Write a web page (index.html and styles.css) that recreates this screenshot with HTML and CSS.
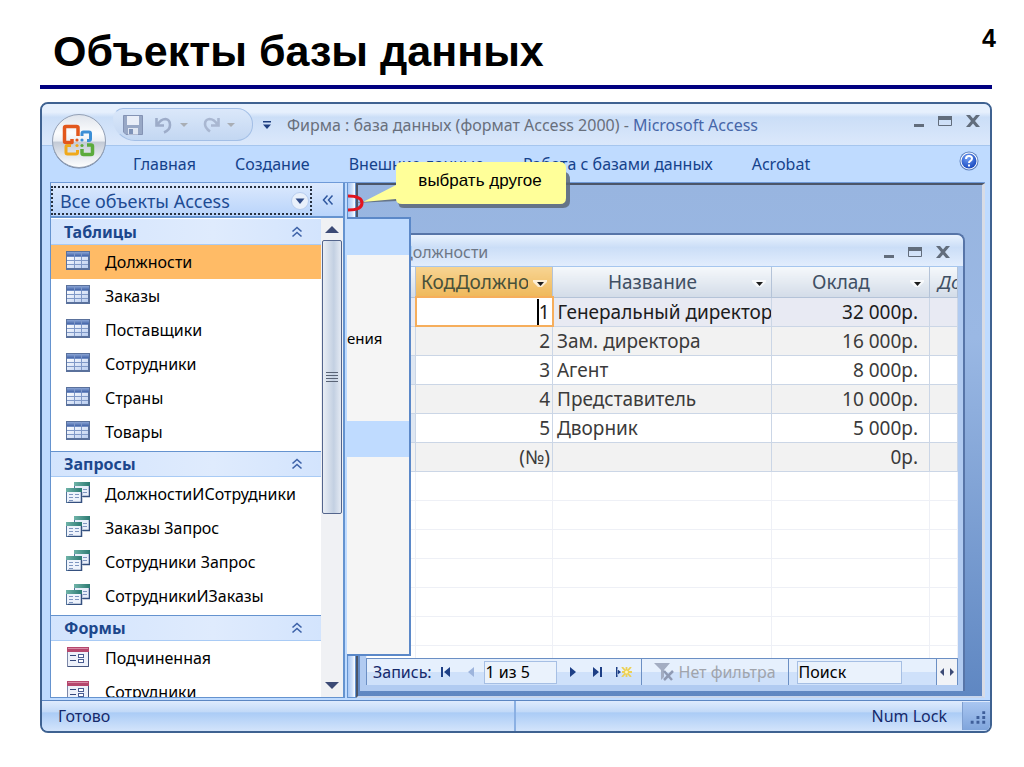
FILE: index.html
```html
<!DOCTYPE html>
<html lang="ru">
<head>
<meta charset="utf-8">
<title>Объекты базы данных</title>
<link rel="stylesheet" href="styles.css">
</head>
<body>
<svg class="defs" aria-hidden="true">
  <defs>
    <linearGradient id="gHead" x1="0" y1="0" x2="0" y2="1"><stop offset="0" stop-color="#8aa5d6"/><stop offset="1" stop-color="#4465a8"/></linearGradient>
    <linearGradient id="gCell" x1="0" y1="0" x2="1" y2="1"><stop offset="0" stop-color="#ffffff"/><stop offset="1" stop-color="#b9cdf0"/></linearGradient>
    <linearGradient id="gTeal" x1="0" y1="0" x2="1" y2="0"><stop offset="0" stop-color="#6fb3a8"/><stop offset="1" stop-color="#2c7a72"/></linearGradient>
    <linearGradient id="gOrb" x1="0" y1="0" x2="0" y2="1"><stop offset="0" stop-color="#dfe4ec"/><stop offset=".35" stop-color="#fbfcfd"/><stop offset=".5" stop-color="#eceff4"/><stop offset=".52" stop-color="#c3cad6"/><stop offset=".8" stop-color="#e6eaf0"/><stop offset="1" stop-color="#ffffff"/></linearGradient>
    <radialGradient id="gHelp" cx=".4" cy=".3" r=".8"><stop offset="0" stop-color="#6f9df5"/><stop offset="1" stop-color="#0f3fb8"/></radialGradient>
    <symbol id="i-table" viewBox="0 0 24 19">
      <rect x="0" y="0" width="24" height="19" fill="#5a719c"/>
      <rect x="1" y="1" width="22" height="4" fill="url(#gHead)"/>
      <rect x="1" y="5" width="21" height="12" fill="url(#gCell)"/>
      <path d="M1 9.500h21M1 13.500h21M8.500 1v16M15.500 1v16" stroke="#8099c8" fill="none"/>
      <path d="M1 5.500h21" stroke="#6f8cc4"/>
    </symbol>
    <symbol id="i-query" viewBox="0 0 24 21">
      <rect x="8.500" y=".5" width="15" height="14" fill="#e8eefa" stroke="#54739a"/>
      <rect x="8" y="0" width="16" height="4" fill="url(#gTeal)"/>
      <path d="M17 7.500h4M17 10.500h4" stroke="#7f96c0"/>
      <rect x=".5" y="6.500" width="15" height="14" fill="#eef3fc" stroke="#54739a"/>
      <rect x="0" y="6" width="16" height="4" fill="url(#gTeal)"/>
      <path d="M3 12.500h4M9 12.500h4M3 15.500h4M9 15.500h4M3 18.500h4" stroke="#7f96c0"/>
      <path d="M15.500 10v10.500H2" stroke="#35507f" stroke-width="1.500" fill="none"/>
      <path d="M23.500 4v10.500H17" stroke="#35507f" stroke-width="1.500" fill="none"/>
    </symbol>
    <symbol id="i-form" viewBox="0 0 22 20">
      <rect x=".5" y=".5" width="21" height="19" fill="#edf1fa" stroke="#7d88a8"/>
      <rect x="0" y="0" width="22" height="5" fill="#b5476d"/>
      <path d="M1 1.500h20" stroke="#d98aa5"/>
      <path d="M3 8.500h6M3 13.500h6" stroke="#34477c"/>
      <rect x="11.500" y="7.500" width="5" height="3" fill="#fff" stroke="#4a5d92"/>
      <rect x="11.500" y="12.500" width="5" height="3" fill="#fff" stroke="#4a5d92"/>
      <path d="M21.500 5v14.500H1" stroke="#44557f" fill="none"/>
    </symbol>
    <symbol id="i-up" viewBox="0 0 12 12">
      <path d="M1.500 5.500L6 1.500l4.500 4M1.500 10.500L6 6.500l4.500 4" fill="none" stroke="#3d62a8" stroke-width="1.600"/>
    </symbol>
    <symbol id="i-min" viewBox="0 0 10 14"><rect x="0" y="10" width="10" height="3" fill="currentColor"/></symbol>
    <symbol id="i-max" viewBox="0 0 14 14"><path d="M.5 2.500h13v9H.5z" fill="none" stroke="currentColor"/><path d="M0 2h14v4H0z" fill="currentColor"/></symbol>
    <symbol id="i-close" viewBox="0 0 14 14"><path d="M0 1h4l3 3.500L10 1h4L9 7l5 6h-4L7 9.500 4 13H0l5-6z" fill="currentColor"/></symbol>
    <symbol id="i-drop" viewBox="0 0 14 8"><path d="M0 0h14v2l-5 5H5L0 2z" fill="#fff" opacity=".7"/><path d="M4 2h7L7.500 6z" fill="#1c1c1c"/></symbol>
  </defs>
</svg>

<main class="slide">
  <header class="slide-head">
    <h1>Объекты базы данных</h1>
    <span class="page-no">4</span>
  </header>

  <section class="app">
    <button class="office" aria-label="Office">
      <svg viewBox="0 0 56 56" width="56" height="56">
        <circle cx="28" cy="29" r="26.500" fill="#6e7f9a"/>
        <circle cx="28" cy="28" r="26.500" fill="url(#gOrb)" stroke="#93a0b5"/>
        <g fill="none" stroke-width="3.500" stroke-linejoin="round">
          <path d="M27 23v-8.500q0-1-1.500-1H15q-1.500 0-1.500 1.500v13q0 1.500 1.500 1.500h6V26" stroke="#e2571c"/>
          <path d="M31 23v-2.500q0-1.500 1.500-1.500H38q1.500 0 1.500 1.500V26q0 1.500-1.500 1.500h-2" stroke="#3c8fd6" stroke-width="3"/>
          <path d="M20 32.500h-3.500q-1.500 0-1.500 1.500v5.500q0 1.500 1.500 1.500H25q1.500 0 1.500-1.500V37" stroke="#f0a91c" stroke-width="3"/>
          <path d="M31 36v4q0 1.500 1.500 1.500H40q1.500 0 1.500-1.500v-6.500q0-1.500-1.500-1.500h-4" stroke="#5bab3c"/>
        </g>
        <g><circle cx="26" cy="27" r="1.600" fill="#e2571c"/><circle cx="31" cy="27" r="1.600" fill="#3c8fd6"/><circle cx="26" cy="32.500" r="1.600" fill="#f0a91c"/><circle cx="31" cy="32.500" r="1.600" fill="#5bab3c"/></g>
      </svg>
    </button>

    <div class="titlebar">
      <div class="quick">
        <button aria-label="Сохранить"><svg viewBox="0 0 20 20" width="20" height="20"><path d="M.5.5h19v19H3l-2.500-2.500z" fill="#98a8c6" stroke="#8493b4"/><rect x="4" y="1" width="12" height="9" fill="#e9eef8"/><rect x="5" y="13" width="10" height="6.500" fill="#dfe6f2"/><rect x="6" y="14" width="4" height="5" fill="#7f93b8"/></svg></button>
        <button aria-label="Отменить"><svg viewBox="0 0 18 18" width="18" height="18"><path d="M1.500 2v7.500H9M2.500 8.500Q6 3 10.500 3 15 3.500 15 9q0 5-6 7.500" fill="none" stroke="#9dacc9" stroke-width="2.600"/></svg></button>
        <span class="tri"></span>
        <button aria-label="Повторить"><svg viewBox="0 0 18 18" width="18" height="18"><path d="M16.500 2v7.500H9M15.500 8.500Q12 3 7.500 3 3 3.500 3 8q0 4 5 7.500" fill="none" stroke="#a9b7d1" stroke-width="2.600"/></svg></button>
        <span class="tri"></span>
      </div>
      <svg class="more" viewBox="0 0 8 8" width="8" height="8"><path d="M0 0h8v1.500H0zM0 3.500h8L4 8z" fill="#1f3f80"/></svg>
      <div class="caption">Фирма : база данных (формат Access 2000) - <span class="product">Microsoft Access</span></div>
      <div class="win-btns">
        <button aria-label="Свернуть"><svg width="10" height="14"><use href="#i-min"/></svg></button>
        <button aria-label="Развернуть"><svg width="14" height="14"><use href="#i-max"/></svg></button>
        <button aria-label="Закрыть"><svg width="14" height="14"><use href="#i-close"/></svg></button>
      </div>
    </div>

    <nav class="ribbon">
      <button>Главная</button>
      <button>Создание</button>
      <button>Внешние данные</button>
      <button>Работа с базами данных</button>
      <button>Acrobat</button>
      <button class="help" aria-label="Справка"><svg viewBox="0 0 20 20" width="20" height="20"><circle cx="10" cy="10" r="9.500" fill="#5a7fc0"/><circle cx="10" cy="10" r="8.500" fill="#fff"/><circle cx="10" cy="10" r="7.500" fill="url(#gHelp)"/><path d="M7 8q0-3 3-3t3 2.500q0 1.500-1.500 2.300T10 12M10 13.500v2" fill="none" stroke="#fff" stroke-width="2"/></svg></button>
    </nav>

    <div class="body">
      <aside class="nav">
        <div class="nav-head">
          <button class="nav-title">Все объекты Access
            <svg viewBox="0 0 18 18" width="18" height="18"><circle cx="9" cy="9" r="8.500" fill="#e9f0fb" stroke="#b8cdee"/><path d="M4.500 6.500h9L9 12z" fill="#2f4a86"/></svg>
          </button>
          <button class="collapse" aria-label="Свернуть область"><svg viewBox="0 0 12 12" width="12" height="12"><path d="M5.500 1.500L1.500 6l4 4.500M10.500 1.500L6.500 6l4 4.500" fill="none" stroke="#2f579f" stroke-width="1.500"/></svg></button>
        </div>
        <div class="nav-main">
          <div class="list">
            <button class="group">Таблицы<svg width="12" height="12"><use href="#i-up"/></svg></button>
            <ul>
              <li><button class="item on"><svg width="24" height="19"><use href="#i-table"/></svg>Должности</button></li>
              <li><button class="item"><svg width="24" height="19"><use href="#i-table"/></svg>Заказы</button></li>
              <li><button class="item"><svg width="24" height="19"><use href="#i-table"/></svg>Поставщики</button></li>
              <li><button class="item"><svg width="24" height="19"><use href="#i-table"/></svg>Сотрудники</button></li>
              <li><button class="item"><svg width="24" height="19"><use href="#i-table"/></svg>Страны</button></li>
              <li><button class="item"><svg width="24" height="19"><use href="#i-table"/></svg>Товары</button></li>
            </ul>
            <button class="group">Запросы<svg width="12" height="12"><use href="#i-up"/></svg></button>
            <ul>
              <li><button class="item"><svg width="24" height="21"><use href="#i-query"/></svg>ДолжностиИСотрудники</button></li>
              <li><button class="item"><svg width="24" height="21"><use href="#i-query"/></svg>Заказы Запрос</button></li>
              <li><button class="item"><svg width="24" height="21"><use href="#i-query"/></svg>Сотрудники Запрос</button></li>
              <li><button class="item"><svg width="24" height="21"><use href="#i-query"/></svg>СотрудникиИЗаказы</button></li>
            </ul>
            <button class="group">Формы<svg width="12" height="12"><use href="#i-up"/></svg></button>
            <ul>
              <li><button class="item"><svg width="24" height="20"><use href="#i-form"/></svg>Подчиненная</button></li>
              <li><button class="item"><svg width="24" height="20"><use href="#i-form"/></svg>Сотрудники</button></li>
            </ul>
          </div>
          <div class="scroll">
            <svg viewBox="0 0 14 8" width="14" height="8"><path d="M0 8l7-7 7 7z" fill="#3c4a75"/></svg>
            <div class="thumb"><i></i></div>
            <svg viewBox="0 0 14 8" width="14" height="8"><path d="M0 0l7 7 7-7z" fill="#3c4a75"/></svg>
          </div>
        </div>
      </aside>

      <div class="splitter"></div>

      <div class="workspace">
        <section class="sheet">
          <div class="sheet-title">
            <span class="sheet-name">Должности</span>
            <div class="win-btns">
              <button aria-label="Свернуть"><svg width="10" height="14"><use href="#i-min"/></svg></button>
              <button aria-label="Развернуть"><svg width="14" height="14"><use href="#i-max"/></svg></button>
              <button aria-label="Закрыть"><svg width="14" height="14"><use href="#i-close"/></svg></button>
            </div>
          </div>
          <div class="grid">
            <table>
              <colgroup><col class="c-sel"><col class="c-id"><col class="c-name"><col class="c-pay"><col></colgroup>
              <thead>
                <tr><th></th><th class="active"><div class="th"><span>КодДолжности</span><svg width="14" height="8"><use href="#i-drop"/></svg></div></th><th><div class="th"><span>Название</span><svg width="14" height="8"><use href="#i-drop"/></svg></div></th><th><div class="th"><span>Оклад</span><svg width="14" height="8"><use href="#i-drop"/></svg></div></th><th class="add">Добавить</th></tr>
              </thead>
              <tbody>
                <tr class="current"><td class="sel"></td><td class="n edit"><span>1</span></td><td>Генеральный директор</td><td class="pay">32 000р.</td><td></td></tr>
                <tr><td class="sel"></td><td class="n">2</td><td>Зам. директора</td><td class="pay">16 000р.</td><td></td></tr>
                <tr><td class="sel"></td><td class="n">3</td><td>Агент</td><td class="pay">8 000р.</td><td></td></tr>
                <tr><td class="sel"></td><td class="n">4</td><td>Представитель</td><td class="pay">10 000р.</td><td></td></tr>
                <tr><td class="sel"></td><td class="n">5</td><td>Дворник</td><td class="pay">5 000р.</td><td></td></tr>
                <tr><td></td><td class="n">(№)</td><td></td><td class="pay">0р.</td><td></td></tr>
                <tr class="blank"><td></td><td></td><td></td><td></td><td></td></tr>
                <tr class="blank"><td></td><td></td><td></td><td></td><td></td></tr>
                <tr class="blank"><td></td><td></td><td></td><td></td><td></td></tr>
                <tr class="blank"><td></td><td></td><td></td><td></td><td></td></tr>
                <tr class="blank"><td></td><td></td><td></td><td></td><td></td></tr>
                <tr class="blank"><td></td><td></td><td></td><td></td><td></td></tr>
                <tr class="blank"><td></td><td></td><td></td><td></td><td></td></tr>
              </tbody>
            </table>
          </div>
          <div class="records">
            <label for="rec">Запись:</label>
            <div class="steps">
              <button aria-label="Первая"><svg viewBox="0 0 10 10" width="10" height="10"><path d="M0 0h2v10H0zM9 0v10L3 5z" fill="#1d3f86"/></svg></button>
              <button aria-label="Предыдущая"><svg viewBox="0 0 10 10" width="10" height="10"><path d="M7 0v10L1 5z" fill="#9db4dc"/></svg></button>
            </div>
            <input id="rec" class="rec" value="1 из 5">
            <div class="steps next">
              <button aria-label="Следующая"><svg viewBox="0 0 10 10" width="10" height="10"><path d="M2 0v10l6-5z" fill="#1d3f86"/></svg></button>
              <button aria-label="Последняя"><svg viewBox="0 0 10 10" width="10" height="10"><path d="M8 0h2v10H8zM1 0v10l6-5z" fill="#1d3f86"/></svg></button>
              <button aria-label="Новая"><svg viewBox="0 0 16 10" width="16" height="10"><path d="M0 0h1.500v10H0zM1 2v6l4-3z" fill="#1d3f86"/><path d="M6 0l9 10M15 0L6 10M10.500 0v10M6 5h10" stroke="#ecd054" stroke-width="1.800"/><circle cx="10.500" cy="5" r="1.500" fill="#fff6c0"/></svg></button>
            </div>
            <button class="filter"><svg viewBox="0 0 20 20" width="20" height="20"><path d="M0 1h16l-6 7v7l-3 3V8z" fill="#a3adc2"/><path d="M10 9l8 9M19 9l-9 9" stroke="#8f9ab3" stroke-width="2.500"/></svg>Нет фильтра</button>
            <div class="find"><input value="Поиск" aria-label="Поиск"></div>
            <div class="hscroll"><svg viewBox="0 0 16 10" width="16" height="10"><path d="M5 1v8L1 5zM11 1v8l4-4z" fill="#3c4a75"/></svg></div>
          </div>
        </section>
      </div>

      <div class="menu">
        <div class="menu-head"></div>
        <div class="menu-part"><span>ения</span></div>
        <div class="menu-head"></div>
        <div class="menu-part rest"></div>
      </div>
    </div>

    <footer class="status">
      <span class="ready">Готово</span>
      <span class="lock">Num Lock</span>
      <svg class="grip" viewBox="0 0 28 28" width="28" height="28"><path d="M20 9h3v3h-3zM20 14h3v3h-3zM20 19h3v3h-3zM14 14h3v3h-3zM14 19h3v3h-3zM8 19h3v3H8z" fill="#3f5f9a"/></svg>
    </footer>

    <div class="callout">
      <svg viewBox="0 0 228 54" width="228" height="54">
        <path d="M12 43L54 36h160V12h8q6 0 6 8v21q0 7-7 7H62q-5 0-5-3l-2-4z" fill="#5c6878" opacity=".85"/>
        <path d="M60 2h158q6 0 6 6v30q0 6-6 6H60q-6 0-6-5l-33 3 33-17V8q0-6 6-6z" fill="#ffff99"/>
        <path d="M6 36q14 0 14 7t-14 7" fill="none" stroke="#e3141e" stroke-width="3"/>
      </svg>
      <span>выбрать другое</span>
    </div>
  </section>
</main>
</body>
</html>
```
FILE: styles.css
```css
* { box-sizing: border-box; }
body { margin: 0; background: #fff; font-family: "Noto Sans", "Open Sans", sans-serif; font-size: 16px; color: #15296b; }
button, input { font: inherit; color: inherit; margin: 0; padding: 0; border: 0; background: none; }
button { display: flex; align-items: center; cursor: pointer; white-space: nowrap; }
ul { list-style: none; margin: 0; padding: 0 0 2px; }
svg { display: block; flex: none; }
.defs { position: absolute; width: 0; height: 0; }

.slide { height: 100vh; display: flex; flex-direction: column; padding: 0 32px 34px 40px; }
.slide-head { display: flex; justify-content: space-between; align-items: flex-start; height: 89px; flex: none; margin-bottom: 13px; border-bottom: 4px solid #000080; font-family: "Liberation Sans", Arial, sans-serif; color: #000; }
h1 { margin: 0; padding: 26px 0 0 13px; font-size: 43px; line-height: 50px; font-weight: 700; }
.page-no { margin-right: -4px; padding-top: 23px; font-size: 25px; line-height: 30px; font-weight: 700; }

.app { position: relative; flex: 1; min-height: 0; display: flex; flex-direction: column; border: 2px solid #3f6291; border-radius: 8px; background: #bfdbff; }
.office { position: absolute; left: 9px; top: 9px; border-radius: 50%; }

.titlebar { display: flex; align-items: center; height: 42px; flex: none; padding: 0 10px 0 71px; border-bottom: 1px solid #a6c6ee; border-radius: 6px 6px 0 0; background: linear-gradient(#e6f0fd 0 20%, #cbdef7 32%, #dbe8fb); }
.quick { display: flex; align-items: center; gap: 12px; width: 140px; height: 33px; padding-left: 9px; border: 1px solid #a3bfe6; border-left-color: transparent; border-radius: 10px 16px 16px 22px; background: linear-gradient(#dbe8fa, #c3d7f2); }
.quick .tri { margin: 0 2px 0 -5px; border: 4px solid transparent; border-top-color: #a9aeb5; border-bottom: 0; }
.more { margin: 0 16px 0 10px; }
.caption { flex: 1; color: #686f7c; white-space: nowrap; }
.product { color: #4666a8; }
.win-btns { display: flex; gap: 14px; margin-bottom: 8px; color: #626d7c; }

.ribbon { display: flex; align-items: center; gap: 39px; height: 36px; flex: none; padding: 0 11px 1px 91px; color: #15428b; }
.help { margin: -6px 0 0 auto; }

.body { position: relative; flex: 1; min-height: 0; display: grid; grid-template-columns: 295px 11px 1fr; grid-template-rows: minmax(0, 1fr); margin: 0 5px 0 8px; border-top: 1px solid #6f9ad8; }
.nav { display: flex; flex-direction: column; min-height: 0; border: 1px solid #6593cf; border-width: 0 2px 1px 1px; background: #fff; }
.nav-head { display: flex; height: 35px; flex: none; border-bottom: 2px solid #6593cf; background: linear-gradient(#dce9fd, #b9d4fb); }
.nav-title { flex: 1; justify-content: space-between; margin: 3px 0 1px; padding: 0 1px 0 7px; border: 2px dotted #26303f; color: #204b93; font-size: 18px; }
.collapse { width: 31px; justify-content: center; }
.nav-main { flex: 1; min-height: 0; display: flex; }
.list { flex: 1; overflow: hidden; }
.group { width: 100%; height: 26px; justify-content: space-between; padding: 0 18px 0 13px; border-top: 1px solid #6593cf; border-bottom: 1px solid #a9cbf5; background: linear-gradient(90deg, #d3e4fd, #dfebfd 60%, #d3e4fd); color: #1c478c; font-weight: 700; }
.list .group:first-child { height: 27px; border-top-color: #fff; }
.item { width: 100%; height: 34px; gap: 15px; padding: 0 0 0 15px; color: #000; }
.item svg { margin-bottom: 3px; }
.item.on { background: #ffbb66; }
.scroll { width: 22px; display: flex; flex-direction: column; align-items: center; padding: 7px 0; background: #f0f1f4; }
.thumb { display: flex; align-items: center; justify-content: center; width: 20px; flex: 0 1 274px; margin: 7px 0 auto; border: 1px solid #54658c; border-radius: 2px; background: linear-gradient(90deg, #e9eef5, #c3d0e2 60%, #e4eaf3); }
.thumb i { width: 12px; height: 11px; background: repeating-linear-gradient(#5a6476 0 1px, transparent 1px 3px); }
.splitter { margin-left: 2px; border: 1px solid #6593cf; border-top: 0; background: linear-gradient(90deg, #a9c8f5, #cfe1fb 60%, #fff); }

.workspace { min-height: 0; display: flex; padding: 48px 17px 5px 2px; border: 2px solid #4b5568; border-width: 2px 3px 2px 2px; border-right-color: #d8dce6; border-bottom-color: #c9d6ec; background: linear-gradient(#98b5e0, #9ab8e4 30%, #5f87c2); }
.sheet { flex: 1; min-width: 0; display: flex; flex-direction: column; border: 2px solid #5775a8; border-left: 0; border-bottom: 0; border-radius: 8px 8px 0 0; background: #b1cbf1; padding: 0 5px 6px 6px; }
.sheet-title { display: flex; align-items: center; justify-content: space-between; height: 32px; flex: none; margin: 0 -5px 0 -6px; padding: 3px 13px 0 41px; border-bottom: 1px solid #a6c6ee; border-radius: 6px 6px 0 0; background: linear-gradient(#e9f2fe, #cbdef7 40%, #e2edfd); color: #6d7786; }
.sheet-title .win-btns { margin-bottom: 0; }
.grid { flex: 1; min-height: 0; overflow: hidden; background: #fff; }
table { width: 100%; table-layout: fixed; border-collapse: collapse; color: #3b3b3b; font-size: 19px; }
.c-sel { width: 49px; } .c-id { width: 137px; } .c-name { width: 219px; } .c-pay { width: 158px; }
th, td { height: 29px; padding: 0 4px; overflow: hidden; white-space: nowrap; line-height: 24px; border: 1px solid #cbd6e6; }
th { height: 30px; padding: 0 5px; font-weight: 400; color: #3f4f63; background: linear-gradient(#f5f8fb, #d3dce8); border-color: #b4c3d8; border-top: 0; }
.th { display: flex; align-items: center; justify-content: space-between; gap: 5px; }
.th span { flex: 1; overflow: hidden; text-align: center; }
.th svg { margin-top: 4px; }
th.active { background: linear-gradient(#f7d492, #efb95c); color: #48513a; }
th.active span { text-align: left; }
th.add { padding-left: 8px; text-align: left; font-style: italic; }
tbody tr:nth-child(even) td { background: #f2f2f2; }
tbody tr.current td { background: #e8eaf3; color: #1c1c1c; }
tbody tr.blank td { background: #fff; border-color: #eef0f6; }
td.n { text-align: right; padding-right: 2px; }
tbody tr.current td.edit { background: #fff; border: 2px solid #f6ae5c; }
.edit span { border-left: 2px solid #000; }
td.pay { padding-right: 11px; text-align: right; }
td.sel { background: #dfe7f2; }

.records { display: flex; align-items: stretch; height: 27px; flex: none; border: 1px solid #6b8fc4; border-bottom: 0; background: linear-gradient(#e6f0fd 50%, #cfe1fa 50%); }
.records label { align-self: center; padding-left: 6px; }
.steps { display: flex; align-items: center; gap: 16px; padding: 0 7px 0 9px; }
.rec, .find input { align-self: center; height: 23px; padding: 0 1px; border: 1px solid #a6bfe4; background: #eaf2fc; color: #000; }
.rec { width: 73px; }
.steps.next { gap: 14px; padding: 0 9px 0 11px; }
.filter { gap: 5px; padding: 0 12px; border: 1px solid #6b8fc4; border-width: 0 1px; color: #a0a4ac; }
.find { flex: 1; display: flex; min-width: 0; padding: 0 34px 0 8px; }
.find input { width: 100%; }
.hscroll { display: flex; align-items: center; justify-content: center; width: 21px; border-left: 1px solid #6b8fc4; background: #f1f3f7; }

.menu { position: absolute; left: 297px; top: 34px; width: 64px; height: 439px; display: flex; flex-direction: column; border: 1px solid #5b88c8; border-width: 2px 2px 2px 0; background: #f5f5f5; color: #000; font-size: 15px; overflow: hidden; }
.menu-head { height: 36px; flex: none; background: #bfdbff; }
.menu-part { height: 166px; display: flex; align-items: center; }
.menu-part.rest { height: auto; flex: 1; }

.status { display: flex; align-items: center; height: 31px; flex: none; margin-top: 2px; border-top: 1px solid #5c86c2; border-radius: 0 0 6px 6px; background: linear-gradient(#dfebfd, #c3daf8 35%, #abccf6 40%, #d3e4fb); overflow: hidden; }
.ready { align-self: stretch; width: 50%; display: flex; align-items: center; padding-left: 16px; border-right: 2px solid #8bb0e3; }
.lock { flex: 1; padding-right: 15px; text-align: right; }
.grip { border-left: 1px solid #7f9fd0; background: linear-gradient(#a9c6f1, #7fa5dc); }

.callout { position: absolute; left: 300px; top: 56px; color: #000; font-family: "Liberation Sans", Arial, sans-serif; font-size: 17px; }
.callout span { position: absolute; left: 53px; right: 5px; top: 11px; text-align: center; line-height: 20px; }
```
